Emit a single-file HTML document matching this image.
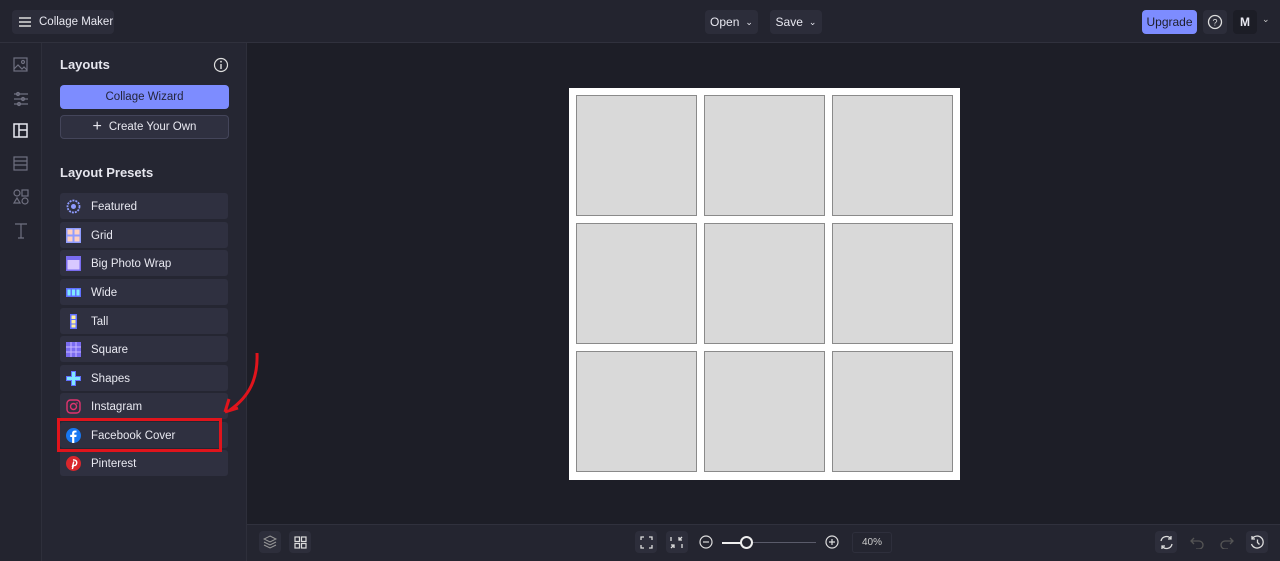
<!DOCTYPE html>
<html><head><meta charset="utf-8"><style>
*{box-sizing:border-box;margin:0;padding:0}
body{width:1280px;height:561px;overflow:hidden;background:#1d1e27;font-family:"Liberation Sans",sans-serif;color:#e6e6ee;position:relative}
.abs{position:absolute}
.top{left:0;top:0;width:1280px;height:43px;background:#23242f;border-bottom:1px solid #30313d}
.btn{position:absolute;background:#2c2d3a;border-radius:4px;font-size:12px;color:#e8e8f0;display:flex;align-items:center;justify-content:center;white-space:nowrap}
.rail{left:0;top:43px;width:42px;height:518px;background:#23242f;border-right:1px solid #2e2f3b}
.side{left:42px;top:43px;width:205px;height:518px;background:#252632;border-right:1px solid #2e2f3b}
.item{position:absolute;left:60px;width:168px;height:26px;background:#2f3040;border-radius:3px;font-size:11.5px;display:flex;align-items:center;padding-left:31px;padding-top:2px;color:#e8e8f0}
.ic{position:absolute;left:6px;top:6px;width:15px;height:15px}
.bottom{left:247px;top:524px;width:1033px;height:37px;background:#242530;border-top:1px solid #30313d}
.cell{position:absolute;width:121px;height:121px;background:#d9d9d9;border:1px solid #8a8a8a}
.sb{position:absolute;width:22px;height:22px;border-radius:4px;background:#2d2e3b;top:531px}
</style></head><body>
<div class="abs top"></div>
<div class="btn" style="left:12px;top:10px;width:102px;height:24px;justify-content:flex-start;padding-left:6px;font-size:11.5px"><svg width="14" height="12" style="margin-right:7px;flex:none"><path d="M1 2h12M1 6h12M1 10h12" stroke="#ddd" stroke-width="1.4"/></svg>Collage Maker</div>
<div class="btn" style="left:705px;top:10px;width:53px;height:24px">Open <span style="font-size:9px;margin-left:6px">&#8964;</span></div>
<div class="btn" style="left:770px;top:10px;width:52px;height:24px">Save <span style="font-size:9px;margin-left:6px">&#8964;</span></div>
<div class="btn" style="left:1142px;top:10px;width:55px;height:24px;background:#7d8cff;color:#1d1e2a">Upgrade</div>
<div class="btn" style="left:1203px;top:10px;width:24px;height:24px"><svg width="16" height="16"><circle cx="8" cy="8" r="6.5" fill="none" stroke="#ddd" stroke-width="1.3"/><text x="8" y="11.5" font-size="9" fill="#ddd" text-anchor="middle" font-family="Liberation Sans">?</text></svg></div>
<div class="btn" style="left:1233px;top:10px;width:24px;height:24px;background:#1c1d26;font-weight:bold">M</div>
<div class="abs" style="left:1262px;top:14px;font-size:9px;color:#ccc">&#8964;</div>

<div class="abs rail"></div>
<svg class="abs" style="left:13px;top:57px" width="16" height="190" fill="none" stroke="#6f7080" stroke-width="1.2">
<rect x="1" y="1" width="13" height="13"/><path d="M1 12l4-4 4 4 2-2 3 3"/><circle cx="10" cy="5" r="1.5"/>
<path d="M1 37h14M1 42h14M1 47h14"/><circle cx="5" cy="37" r="1.5"/><circle cx="10" cy="42" r="1.5"/><circle cx="6" cy="47" r="1.5"/>
<rect x="1" y="67" width="13" height="13" stroke="#e8e8f0" stroke-width="1.5"/><path d="M6 67v13M6 73h8" stroke="#e8e8f0" stroke-width="1.5"/>
<rect x="1" y="100" width="13" height="13"/><path d="M1 104h13M1 108h13"/>
<circle cx="4" cy="136" r="3"/><rect x="9" y="133" width="6" height="6"/><path d="M4 141l3 5h-6z"/><circle cx="12" cy="144" r="3"/>
<path d="M2 167h12M8 167v14M5 181h6"/>
</svg>

<div class="abs side"></div>
<div class="abs" style="left:60px;top:57px;font-size:13px;font-weight:bold">Layouts</div>
<svg class="abs" style="left:213px;top:57px" width="16" height="16"><circle cx="8" cy="8" r="6.5" fill="none" stroke="#ddd" stroke-width="1.2"/><path d="M8 7v5" stroke="#ddd" stroke-width="1.4"/><circle cx="8" cy="4.7" r="0.9" fill="#ddd"/></svg>
<div class="btn" style="left:60px;top:85px;width:169px;height:24px;background:#7d8cff;color:#23243a;font-size:11.5px">Collage Wizard</div>
<div class="btn" style="left:60px;top:115px;width:169px;height:24px;background:#2f3040;border:1px solid #44455a;font-size:11.5px"><span style="font-size:16px;margin-right:7px">+</span>Create Your Own</div>
<div class="abs" style="left:60px;top:165px;font-size:13px;font-weight:bold">Layout Presets</div>

<div class="item" style="top:193px"><svg class="ic" viewBox="0 0 15 15"><circle cx="7.5" cy="7.5" r="6" fill="none" stroke="#8f9cff" stroke-width="1.8" stroke-dasharray="2 1"/><circle cx="7.5" cy="7.5" r="2.5" fill="#8f9cff"/></svg>Featured</div>
<div class="item" style="top:222px"><svg class="ic" viewBox="0 0 15 15"><rect width="15" height="15" fill="#8f9cff"/><rect x="1.5" y="1.5" width="5" height="5" fill="#ffd0c0"/><rect x="8.5" y="1.5" width="5" height="5" fill="#ffd0c0"/><rect x="1.5" y="8.5" width="5" height="5" fill="#ffd0c0"/><rect x="8.5" y="8.5" width="5" height="5" fill="#ffd0c0"/></svg>Grid</div>
<div class="item" style="top:250px"><svg class="ic" viewBox="0 0 15 15"><rect width="15" height="15" fill="#7a6cf0"/><rect x="1.5" y="4" width="12" height="9.5" fill="#d8c8ff"/></svg>Big Photo Wrap</div>
<div class="item" style="top:279px"><svg class="ic" viewBox="0 0 15 15"><rect y="3" width="15" height="9" fill="#6070ff"/><rect x="1.5" y="4.5" width="3" height="6" fill="#7fe8ff"/><rect x="6" y="4.5" width="3" height="6" fill="#7fe8ff"/><rect x="10.5" y="4.5" width="3" height="6" fill="#7fe8ff"/></svg>Wide</div>
<div class="item" style="top:308px"><svg class="ic" viewBox="0 0 15 15"><rect x="4" y="0" width="7" height="15" fill="#6070ff"/><rect x="5.5" y="1.5" width="4" height="3.5" fill="#fff19a"/><rect x="5.5" y="6" width="4" height="3.5" fill="#fff19a"/><rect x="5.5" y="10.5" width="4" height="3" fill="#fff19a"/></svg>Tall</div>
<div class="item" style="top:336px"><svg class="ic" viewBox="0 0 15 15"><rect width="15" height="15" fill="#7a6cf0"/><path d="M5 0v15M10 0v15M0 5h15M0 10h15" stroke="#c8b8ff" stroke-width="1"/></svg>Square</div>
<div class="item" style="top:365px"><svg class="ic" viewBox="0 0 15 15"><rect x="5" y="0" width="5" height="15" fill="#6070ff"/><rect x="0" y="5" width="15" height="5" fill="#6070ff"/><rect x="6" y="1" width="3" height="13" fill="#7fe8ff"/><rect x="1" y="6" width="13" height="3" fill="#7fe8ff"/></svg>Shapes</div>
<div class="item" style="top:393px"><svg class="ic" viewBox="0 0 15 15"><rect x="1" y="1" width="13" height="13" rx="3.5" fill="none" stroke="#e0336f" stroke-width="1.4"/><circle cx="7.5" cy="7.5" r="3" fill="none" stroke="#e0336f" stroke-width="1.4"/><circle cx="11" cy="4" r="0.8" fill="#e0336f"/></svg>Instagram</div>
<div class="item" style="top:422px"><svg class="ic" viewBox="0 0 15 15"><circle cx="7.5" cy="7.5" r="7.5" fill="#1877f2"/><path d="M8.3 15V9h2l.3-2.2H8.3V5.5c0-.6.2-1 1-1h1.2V2.6H8.8C7.1 2.6 6.1 3.6 6.1 5.3v1.5H4.2V9h1.9v6" fill="#fff"/></svg>Facebook Cover</div>
<div class="item" style="top:450px"><svg class="ic" viewBox="0 0 15 15"><circle cx="7.5" cy="7.5" r="7.5" fill="#d9262c"/><path d="M7 4c2.5-.3 4 1 3.7 3.2-.3 2-2 2.7-3.2 2L6.3 13M7.8 5.5 6.3 11" stroke="#fff" stroke-width="1.4" fill="none"/></svg>Pinterest</div>
<div class="abs" style="left:57px;top:418px;width:165px;height:34px;border:3px solid #e0141c"></div>
<svg class="abs" style="left:220px;top:348px" width="45" height="70"><path d="M37 5C38 30 30 48 10 62" stroke="#e0141c" stroke-width="3" fill="none"/><path d="M5 64L9 51M5 64L18 60" stroke="#e0141c" stroke-width="3" fill="none"/></svg>

<div class="abs" style="left:569px;top:88px;width:391px;height:392px;background:#fff"></div>
<div class="cell" style="left:576px;top:95px"></div><div class="cell" style="left:704px;top:95px"></div><div class="cell" style="left:832px;top:95px"></div>
<div class="cell" style="left:576px;top:223px"></div><div class="cell" style="left:704px;top:223px"></div><div class="cell" style="left:832px;top:223px"></div>
<div class="cell" style="left:576px;top:351px"></div><div class="cell" style="left:704px;top:351px"></div><div class="cell" style="left:832px;top:351px"></div>

<div class="abs bottom"></div>
<div class="sb" style="left:259px"></div><div class="sb" style="left:289px"></div>
<svg class="abs" style="left:263px;top:535px" width="14" height="14" fill="none" stroke="#999" stroke-width="1"><path d="M7 1l6 3-6 3-6-3z"/><path d="M1 7l6 3 6-3M1 10l6 3 6-3"/></svg>
<svg class="abs" style="left:294px;top:536px" width="13" height="13" fill="none" stroke="#ddd" stroke-width="1.2"><rect x="1" y="1" width="4.5" height="4.5"/><rect x="7.5" y="1" width="4.5" height="4.5"/><rect x="1" y="7.5" width="4.5" height="4.5"/><rect x="7.5" y="7.5" width="4.5" height="4.5"/></svg>
<div class="sb" style="left:635px"></div><div class="sb" style="left:666px"></div>
<svg class="abs" style="left:640px;top:536px" width="13" height="13" fill="none" stroke="#ddd" stroke-width="1.3"><path d="M1 4V1h3M9 1h3v3M12 9v3H9M4 12H1V9"/></svg>
<svg class="abs" style="left:670px;top:536px" width="13" height="13" fill="none" stroke="#ddd" stroke-width="1.3"><path d="M1 1v4M12 12V8M9 1v3h3M4 12V9H1M12 1L9 4M1 12l3-3"/></svg>
<svg class="abs" style="left:699px;top:535px" width="14" height="14" fill="none" stroke="#ddd" stroke-width="1.2"><circle cx="7" cy="7" r="6"/><path d="M4 7h6"/></svg>
<div class="abs" style="left:722px;top:542px;width:24px;height:2px;background:#eee"></div>
<div class="abs" style="left:746px;top:542px;width:70px;height:1px;background:#5a5b6a"></div>
<div class="abs" style="left:740px;top:536px;width:13px;height:13px;border-radius:50%;border:2px solid #eee;background:#242530"></div>
<svg class="abs" style="left:825px;top:535px" width="14" height="14" fill="none" stroke="#ddd" stroke-width="1.2"><circle cx="7" cy="7" r="6"/><path d="M4 7h6M7 4v6"/></svg>
<div class="abs" style="left:852px;top:532px;width:40px;height:21px;border:1px solid #2e2f3c;border-radius:3px;font-size:10px;color:#ccc;text-align:right;padding:4px 9px 0 0">40%</div>
<div class="sb" style="left:1155px"></div><div class="sb" style="left:1246px"></div>
<svg class="abs" style="left:1159px;top:535px" width="15" height="15" fill="none" stroke="#ddd" stroke-width="1.3"><path d="M2 6a5.5 5.5 0 0 1 10-2M13 9a5.5 5.5 0 0 1-10 2"/><path d="M12 1v3H9M3 14v-3h3"/></svg>
<svg class="abs" style="left:1190px;top:536px" width="14" height="13" fill="none" stroke="#555" stroke-width="1.3"><path d="M4 2L1 5l3 3M1 5h8a4 4 0 0 1 0 8H6"/></svg>
<svg class="abs" style="left:1220px;top:536px" width="14" height="13" fill="none" stroke="#555" stroke-width="1.3"><path d="M10 2l3 3-3 3M13 5H5a4 4 0 0 0 0 8h3"/></svg>
<svg class="abs" style="left:1250px;top:535px" width="15" height="15" fill="none" stroke="#ddd" stroke-width="1.3"><path d="M2 4a6 6 0 1 1-.5 5"/><path d="M2 1v3h3M7.5 4.5v3l2 2"/></svg>
</body></html>
